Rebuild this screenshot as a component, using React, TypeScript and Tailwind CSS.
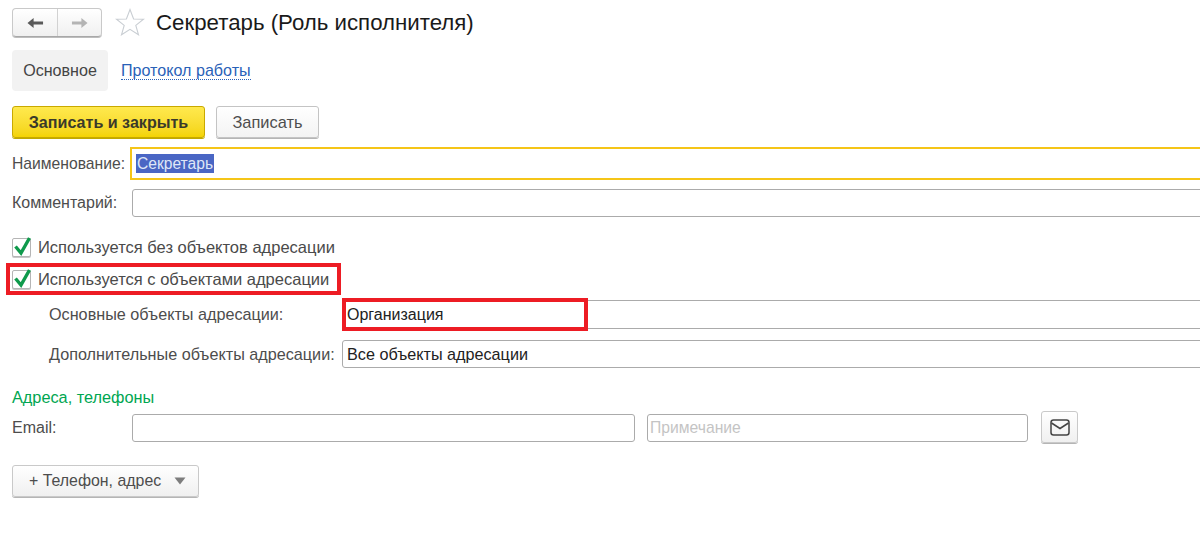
import * as React from "react";

const labelText = "text-[16px] leading-none text-[#4d4d4d]";
const wideLabel = "text-[16.2px] leading-none text-[#4d4d4d]";
const fieldBox = "h-full rounded-[3px] border border-[#ababab] bg-white";

function Check() {
  return (
    <span className="relative h-[19px] w-[19px] shrink-0 rounded-[2px] border border-[#b5b5b5] bg-white shadow-[0_1px_0_#c8c8c8]">
      <svg viewBox="0 0 20 22" className="absolute -top-[4px] left-0 h-[22px] w-[20px]">
        <path d="M2.5 11.5 L8 18 L16.5 3" fill="none" stroke="#0f9a4c" strokeWidth="3.4" />
      </svg>
    </span>
  );
}

function CheckRow({ text }: { text: string }) {
  return (
    <div className="flex h-[20px] items-center gap-[7px]">
      <Check />
      <span className="text-[16.5px] leading-none text-[#4a4a4a]">{text}</span>
    </div>
  );
}

export default function App() {
  return (
    <div className="h-[537px] w-[1200px] overflow-hidden bg-white pl-3 font-['Liberation_Sans',Arial,sans-serif]">
      {/* header */}
      <div className="flex h-[50px] items-start pt-2">
        <div className="flex h-[29px] w-[90px] rounded-[4px] border border-[#c9c9c9] border-b-[#a8a8a8] bg-gradient-to-b from-white to-[#f0f0f0] shadow-[0_1px_0_#bdbdbd]">
          <span className="flex w-[45px] items-center justify-center border-r border-[#d2d2d2]">
            <svg viewBox="0 0 18 12" className="h-3 w-[17px]">
              <path d="M0.5 6 L7 0.8 V4.4 H17 V7.6 H7 V11.2 Z" fill="#5a5a5a" />
            </svg>
          </span>
          <span className="flex flex-1 items-center justify-center">
            <svg viewBox="0 0 18 12" className="h-3 w-[17px]">
              <path d="M17.5 6 L11 0.8 V4.4 H1 V7.6 H11 V11.2 Z" fill="#b4b4b4" />
            </svg>
          </span>
        </div>
        <svg viewBox="0 0 30 28" className="ml-[13px] h-[28px] w-[30px]">
          <path
            d="M15 1.5 L18.6 11 L28.5 11.3 L20.8 17.4 L23.5 26.8 L15 21.4 L6.5 26.8 L9.2 17.4 L1.5 11.3 L11.4 11 Z"
            fill="#fff"
            stroke="#c9ced3"
            strokeWidth="1.1"
          />
        </svg>
        <h1 className="ml-[11px] text-[22.25px] font-normal leading-[30px] text-[#1a1a1a]">Секретарь (Роль исполнителя)</h1>
      </div>

      {/* tabs */}
      <div className="flex h-[41px] items-center">
        <span className="flex h-full w-[96px] items-center justify-center rounded-[4px] bg-[#f2f2f2] text-[16.1px] text-[#444]">Основное</span>
        <a className="ml-[13px] border-b border-dotted border-[#2a62b8] text-[16.1px] leading-[17px] text-[#2a62b8]">Протокол работы</a>
      </div>

      {/* actions */}
      <div className="mt-[15px] flex h-[32px] gap-[11px]">
        <button className="w-[193px] rounded-[3px] border border-[#c9a900] bg-gradient-to-b from-[#ffe94d] to-[#f4d400] text-[16.1px] font-bold text-[#3a3a2a] shadow-[0_1px_0_#bfa900]">
          Записать и закрыть
        </button>
        <button className="w-[103px] rounded-[3px] border border-[#c4c4c4] bg-gradient-to-b from-white to-[#f3f3f3] text-[16.4px] text-[#4d4d4d] shadow-[0_1px_0_#b5b5b5]">
          Записать
        </button>
      </div>

      {/* name */}
      <div className="mt-[9px] flex h-[33px] items-center">
        <span className="w-[118px] shrink-0 text-[15.7px] leading-none text-[#4d4d4d]">Наименование:</span>
        <div className="-mr-2 flex h-full flex-1 items-center border-2 border-[#f5c518] bg-white pl-1">
          <span className="bg-[#4a66c4] px-px text-[15.6px] leading-[19px] text-[#dfe6f7]">Секретарь</span>
        </div>
      </div>

      {/* comment */}
      <div className="mt-[9px] flex h-[28px] items-center">
        <span className={`${labelText} w-[120px]`}>Комментарий:</span>
        <div className={`${fieldBox} -mr-2 flex-1`} />
      </div>

      {/* checkboxes */}
      <div className="mt-[20px]">
        <CheckRow text="Используется без объектов адресации" />
      </div>
      <div className="relative mt-[12px]">
        <CheckRow text="Используется с объектами адресации" />
        <div className="absolute -left-[6px] -top-[6px] h-[32px] w-[335px] border-[4px] border-[#ed1c24]" />
      </div>

      {/* addressing */}
      <div className="mt-[11px] flex h-[29px] items-center pl-[37px]">
        <span className={`${wideLabel} w-[293px] whitespace-nowrap`}>Основные объекты адресации:</span>
        <div className="relative -mr-2 h-full flex-1">
          <div className={`${fieldBox} flex items-center pl-1 text-[16px] text-[#222]`}>Организация</div>
          <div className="absolute -top-[2px] left-0 h-[33px] w-[246px] border-[4px] border-[#ed1c24]" />
        </div>
      </div>
      <div className="mt-[11px] flex h-[28px] items-center pl-[37px]">
        <span className={`${wideLabel} w-[293px] whitespace-nowrap`}>Дополнительные объекты адресации:</span>
        <div className={`${fieldBox} -mr-2 flex flex-1 items-center pl-1 text-[16.2px] text-[#222]`}>Все объекты адресации</div>
      </div>

      {/* contacts */}
      <div className="mt-[20px] text-[16.3px] leading-[18px] text-[#00a651]">Адреса, телефоны</div>
      <div className="mt-[5px] flex h-[32px] items-start">
        <span className={`${labelText} mt-[9px] w-[120px]`}>Email:</span>
        <div className={`${fieldBox} mt-[3px] !h-[28px] w-[503px]`} />
        <div className={`${fieldBox} ml-3 mt-[3px] flex !h-[28px] w-[381px] items-center pl-[2px] text-[15.7px] text-[#c4c4c4]`}>Примечание</div>
        <button className="ml-[13px] flex h-[32px] w-[37px] items-center justify-center rounded-[3px] border border-[#c9c9c9] bg-gradient-to-b from-white to-[#f0f0f0] shadow-[0_1px_0_#b5b5b5]">
          <svg viewBox="0 0 20 17" className="h-[17px] w-[20px]">
            <rect x="1" y="1" width="18" height="15" rx="2.5" fill="none" stroke="#444" strokeWidth="1.5" />
            <path d="M1.5 4 L10 9.5 L18.5 4" fill="none" stroke="#444" strokeWidth="1.5" />
          </svg>
        </button>
      </div>

      <button className="mt-[22px] flex h-[32px] w-[187px] items-center rounded-[3px] border border-[#c9c9c9] bg-gradient-to-b from-white to-[#f0f0f0] pl-4 text-[15.9px] text-[#4d4d4d] shadow-[0_1px_0_#b5b5b5]">
        + Телефон, адрес
        <svg viewBox="0 0 12 8" className="ml-[13px] h-2 w-3">
          <path d="M0.5 0.5 H11.5 L6 7.5 Z" fill="#7d7d7d" />
        </svg>
      </button>
    </div>
  );
}
